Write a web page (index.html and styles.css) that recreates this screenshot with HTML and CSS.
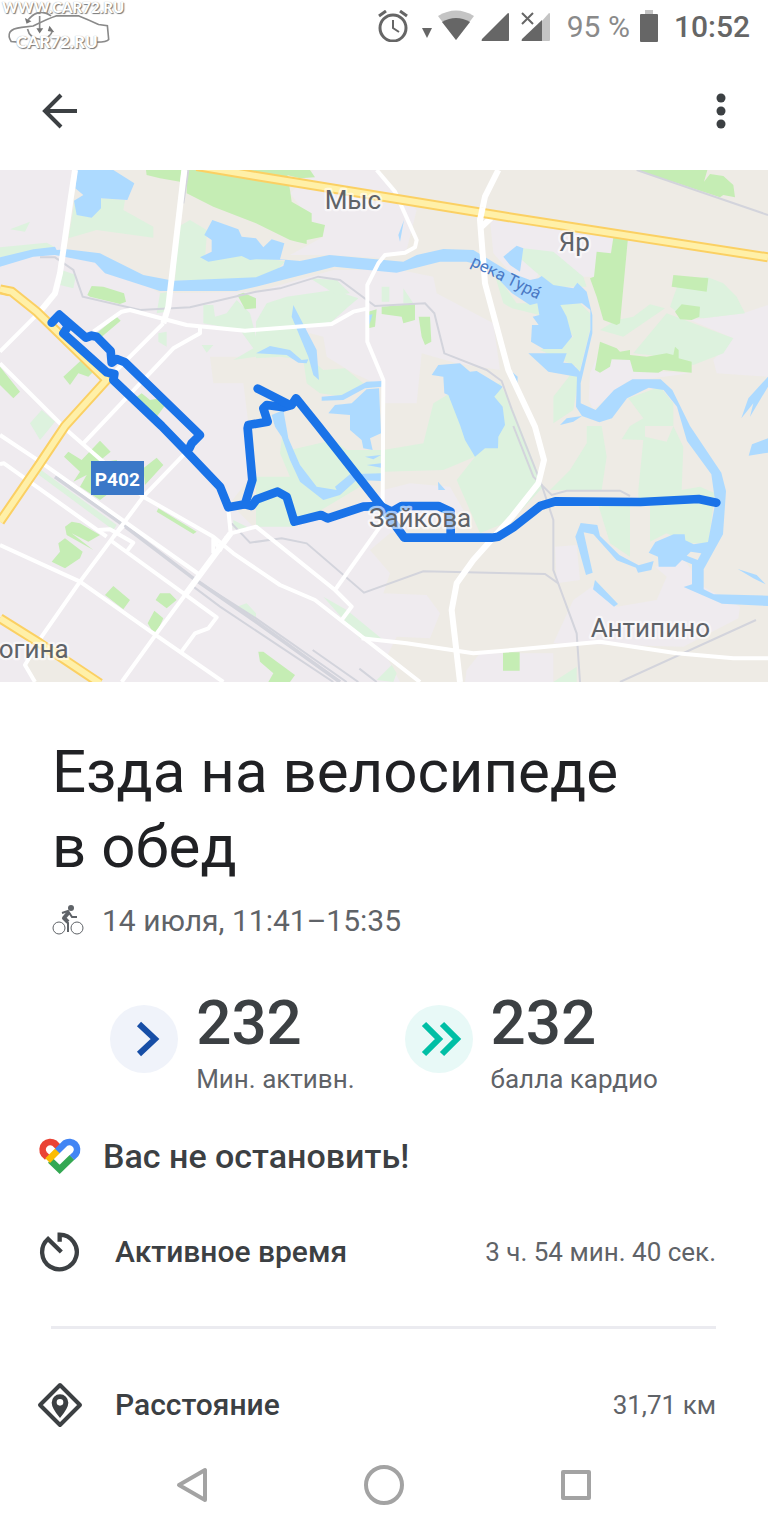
FILE: index.html
```
<!DOCTYPE html>
<html lang="ru">
<head>
    <meta charset="UTF-8">
    <meta name="viewport" content="width=device-width, initial-scale=1.0">
    <title>Езда на велосипеде в обед</title>
    <link rel="stylesheet" href="styles.css">
</head>
<body>
    <div class="watermark">
        <span class="watermark-text">WWW.CAR72.RU</span>
        <svg class="watermark-car" viewBox="0 0 330 110" aria-hidden="true">
            <g fill="none" stroke="#8a8a8a" stroke-width="5">
                <path d="M50 92 L28 90 Q18 74 24 62 Q32 50 60 47 L95 43 Q140 20 165 12 H235 Q265 24 295 38 L322 42 L326 84 Q320 92 290 92"/>
                <path d="M80 24 Q112 -15 150 12 M78 52 Q84 82 120 84 Q148 78 154 58 M115 12 V60"/>
            </g>
            <path fill="#777" d="M70 18 L90 28 75 36Z M160 62 L145 42 140 58Z M105 50 H126 L115 66Z"/>
        </svg>
        <span class="watermark-text watermark-bottom">CAR72.RU</span>
    </div>

    <div class="status-bar">
        <svg class="alarm" width="30" height="32" viewBox="0 0 30 32" aria-label="Будильник">
            <g fill="none" stroke="#666" stroke-width="3">
                <circle cx="15" cy="18" r="13"/>
                <path d="M1 6 L8 1 M29 6 L22 1"/>
                <path d="M15 10 V18 L21 22" stroke-width="2"/>
            </g>
        </svg>
        <svg class="wifi" width="52" height="32" viewBox="0 0 52 32" aria-label="Wi-Fi">
            <path fill="#666" d="M0 18 H10 L5 28Z"/>
            <path fill="#c4c4c4" d="M16 6 Q34 -5 52 6 L34 30Z"/>
            <path fill="#666" d="M20 12 Q34 4 48 12 L34 30Z"/>
        </svg>
        <svg class="signal" width="28" height="32" viewBox="0 0 28 32" aria-label="Сеть">
            <path fill="#666" d="M27 3 Q28 3 28 4 V30 Q28 31 27 31 H1 Q0 31 1 29Z"/>
        </svg>
        <svg class="signal-off" width="30" height="32" viewBox="0 0 30 32" aria-label="Нет сети">
            <path fill="#c4c4c4" d="M28 3 Q29 3 29 4 V30 Q29 31 28 31 H20 V12Z"/>
            <path fill="#666" d="M21 10 V31 H1 Q0 31 1 29Z"/>
            <path fill="none" stroke="#666" stroke-width="2" d="M1 3 L12 14 M12 3 L1 14"/>
        </svg>
        <span class="battery-level">95 %</span>
        <svg class="battery" width="18" height="32" viewBox="0 0 18 32" aria-label="Батарея">
            <path fill="#c4c4c4" d="M5 0 H13 V5 H5Z"/>
            <rect fill="#666" y="4" width="18" height="28" rx="1"/>
        </svg>
        <span class="clock">10:52</span>
    </div>

    <header class="toolbar">
        <button type="button" class="icon-button" aria-label="Назад">
            <svg width="36" height="36" viewBox="0 0 36 36">
                <path fill="none" stroke="#3c4043" stroke-width="4" d="M35 18 H4 M19 2 L3 18 L19 34"/>
            </svg>
        </button>
        <button type="button" class="icon-button" aria-label="Ещё">
            <svg width="10" height="36" viewBox="0 0 20 72">
                <g fill="#3c4043">
                    <circle cx="10" cy="10" r="9"/>
                    <circle cx="10" cy="36" r="9"/>
                    <circle cx="10" cy="62" r="9"/>
                </g>
            </svg>
        </button>
    </header>

    <main>
        <!-- Карта маршрута -->
        <svg class="map" viewBox="0 0 2304 1536" role="img" aria-label="Карта маршрута">
            <rect class="land" width="2304" height="1536"/>
            <g class="urban">
                <path d="M0 0H225L190 235 290 260 480 370 768 365 1000 300 1200 300 1300 320 1310 370 1480 460 1500 600 1370 580 1265 550 1250 700 1150 700V650L1060 610 980 560 970 500 930 490 768 560 630 560 640 640 730 640 745 760V930L690 1000 760 1070 1000 1040 1150 960 1230 940 1350 950 1390 1020 1300 1060 1170 1090 1110 1140 1170 1210 1150 1270 1280 1275 1320 1330 1290 1405 1190 1400 1160 1460 1200 1536H0Z"/>
                <path d="M870 70L940 0H1130L1190 70 1250 120 1220 240 1150 265 990 255 870 255 970 200Z"/>
                <path d="M1470 150L1536 160 1840 205 1815 320 1750 320 1620 300 1600 345 1560 340 1480 250Z"/>
                <path d="M2070 450L2230 430 2304 405V620L2150 610 2140 570 2200 505Z"/>
                <path d="M1800 540L1900 560 1900 600 2070 610 1880 635 1780 720 1766 690 1770 610Z"/>
                <path d="M1665 1130L1730 1125 1740 1230 1670 1240Z"/>
                <path d="M1720 1290L1790 1240 1850 1310 1970 1290 2000 1220 1965 1190 2050 1165 2110 1250 2220 1310 2215 1345 2050 1430 1850 1425 1660 1420Z"/>
                <path d="M1400 1500L1440 1450 1660 1450V1536H1395Z"/>
            </g>
            <path class="land" d="M75 1490L130 1415 300 1536H105Z"/>

            <g class="meadow">
                <path d="M225 90L300 85 375 90 370 120 460 170V203L290 180 205 205Z"/>
                <path d="M30 178L90 155 75 185Z"/>
                <path d="M0 232L140 218 165 232 0 262Z"/>
                <path d="M185 300L228 315 220 355 180 345Z"/>
                <path d="M535 170L570 150 620 180 640 260 768 255 855 275 820 310 768 325 525 332Z"/>
                <path d="M480 370L510 365 500 425 470 430Z"/>
                <path d="M610 405L640 405 645 440 680 430 710 390 750 430 768 500V560L700 570 760 535 720 480 610 460Z"/>
                <path d="M768 455L800 400 860 380 1000 360 1075 385 1045 410 995 455 910 470 935 570 970 600 1035 595 1090 640 1030 680 960 670 920 640 910 570 840 560 768 565Z"/>
                <path d="M475 490L500 485 500 530 475 515Z M605 525H640L620 548Z M90 760L125 720 165 755 120 810Z"/>
                <path d="M930 325L1010 330 1050 370 1010 375Z M1145 350H1168V395H1145Z M1210 355L1240 400H1210Z"/>
                <path d="M850 768L870 840 1000 810 1040 840 1150 840 1270 820 1300 700 1350 670 1500 640 1540 720 1630 950 1536 1050 1440 1090 1370 930 1425 860 1330 900 1150 905 1130 920 980 1010 880 1070H768V920H870L840 850Z"/>
                <path d="M1570 235L1660 245 1750 320 1760 350 1660 350 1600 300 1560 265Z"/>
                <path d="M1480 300L1550 400 1618 400 1618 435 1536 415 1510 400Z"/>
                <path d="M1650 400H1740L1770 430V480L1740 600 1720 720 1660 760V680L1730 590 1620 540 1690 520 1720 500Z"/>
                <path d="M1800 480L1850 450 1900 440 1950 403 1995 415 1870 500Z"/>
                <path d="M1900 550L2000 430 2200 505 2170 550 2080 585 1990 560Z"/>
                <path d="M2035 340L2120 320 2170 340 2210 380 2235 430 2110 445 2050 440 2010 410Z"/>
                <path d="M1885 685L1980 650 2020 700 2020 768H1890L1930 745Z"/>
                <path d="M1650 960L1710 900 1760 820V768H1805L1820 860 1805 960Z"/>
                <path d="M1890 768H1935V800L2000 815 2020 768 2050 830 2045 960 2100 950 2145 970 2125 1120 2060 1120 2000 1090 1950 1115V1000H1915V960L1930 810 1865 808Z"/>
                <path d="M1795 1005H1890V1160L1830 1120Z"/>
                <path d="M110 890L350 1065 340 1080 110 910Z M700 1050L760 1080 700 1075Z"/>
                <path d="M970 1280L1040 1320 1150 1410 1080 1405Z M1130 1530L1175 1485 1190 1510 1180 1536Z M1660 1536L1730 1490V1536Z M710 1310L740 1300 768 1330V1350Z"/>
            </g>

            <g class="forest">
                <path d="M438 0H545L540 35 480 25 440 15Z"/>
                <path d="M562 0H860L870 60 875 95 935 130 935 155 975 165 968 200 920 210V222L890 215 870 210 768 160 640 110 560 70Z"/>
                <path d="M800 0H930L945 22 900 25Z"/>
                <path d="M262 375L275 348 310 350 372 370 378 395 360 402 270 380Z"/>
                <path d="M712 375L730 368 768 385V415L735 418Z"/>
                <path d="M290 490L350 440 362 452 300 505Z M190 620L250 565 285 600 265 620 235 610 210 645Z"/>
                <path d="M405 685L425 670 450 690 480 685 500 700 470 740Z M0 590L60 665 40 685 0 645Z"/>
                <path d="M1105 425L1130 418 1125 470 1105 475Z M1145 410L1245 402 1245 450 1210 460 1205 440 1145 432Z M1256 440H1290L1294 515 1275 525 1265 500Z"/>
                <path d="M1840 203H1884L1860 460 1850 465 1810 450 1790 380 1770 325 1782 320 1790 245 1833 250Z"/>
                <path d="M1910 0H2122L2112 35 2130 12 2170 18 2200 45 2205 82 2170 75 2160 82Z"/>
                <path d="M1800 515L1850 535 1860 545 1890 540V555L1940 560 2000 550 2020 555 2025 530 2036 540V565L2075 575V608L1990 600 1975 608 1900 605 1890 570 1835 568 1830 590 1800 608 1785 600Z"/>
                <path d="M2020 315L2125 325 2120 365 2015 350Z M2025 425L2045 403 2100 410 2098 440 2075 450 2040 448Z"/>
                <path d="M192 860L205 845 245 870 300 812 332 845 290 880 350 870 380 930 300 990 240 950 260 915 220 935 240 905Z"/>
                <path d="M430 895L470 863 490 885 435 945Z M475 1015L590 1085 580 1092 470 1025Z"/>
                <path d="M195 1070L215 1055 240 1060 300 1095 265 1115 215 1090 280 1140 200 1095Z M155 1175L180 1145 175 1120 195 1105 248 1145 240 1165 195 1195Z"/>
                <path d="M315 1275L340 1248 390 1290 370 1318Z M467 1290L480 1270 510 1270 530 1290 500 1315Z M443 1360L463 1322 490 1345 470 1388 455 1380Z"/>
                <path d="M775 1445L790 1445 885 1515 870 1536H805L820 1510 780 1475Z M1509 1447H1559V1502H1509Z"/>
            </g>

            <path class="land" d="M622 175L645 215 640 250 615 265Z"/>

            <g class="water">
                <path d="M232 0H340L403 40 382 90 303 85 303 115 275 143 230 135 222 92 250 75 226 55Z"/>
                <path d="M637 150L715 178 725 200 768 205 790 232 815 208 853 220 840 268 900 273 988 255 1210 275 1250 255 1330 237 1420 240 1536 310 1590 330 1615 325 1625 318 1660 345 1720 355 1732 338 1760 365 1777 435V490L1742 640V700L1787 720 1842 660 1897 628H1982L2017 660 2070 768 2164 908 2178 963 2169 1093 2111 1198V1258L2141 1273 2304 1277V1308L2166 1301 2051 1251 2076 1243V1183L2046 1170 2026 1190H1976L1974 1160 1946 1148 1966 1116 2021 1093H2054L2056 1111 2081 1123 2124 1116 2146 998 2134 913 2061 813 2044 755 2031 710 1991 660 1946 653 1881 685 1836 745 1798 757 1746 738 1728 710 1731 620 1700 615 1645 605 1585 550H1700L1690 578 1715 580 1740 605 1771 480V420L1746 400 1681 405 1700 440 1716 500 1686 537H1631L1593 515 1596 465H1616L1598 440 1618 435 1612 400 1590 405 1536 370 1460 290 1400 275 1320 275 1190 308 1003 290 768 350 710 363H480L315 310 285 278 165 255 100 260 0 290V262L100 238 165 230 170 240 200 238 300 250 430 315 520 332 768 322 850 288 855 270 768 268 750 270 725 258 625 275 600 262 635 245V210L613 195Z"/>
                <path d="M1212 150L1200 215 1195 195Z M1510 260L1550 227 1570 235 1560 305 1530 285Z"/>
                <path d="M880 405L950 540 957 630 940 615 925 560 875 440Z M768 550L810 528 870 540 905 570 925 568 920 580 895 578 860 555Z"/>
                <path d="M965 680L1025 675 1100 635 1148 633 1145 650 1095 655 1030 690 965 692Z"/>
                <path d="M985 730L1005 705 1055 700 1100 658 1137 655 1143 790 1110 805 1118 840 1090 835 1085 810 1050 780 1050 735Z"/>
                <path d="M815 735L850 720 865 805 900 885 950 950 1010 960 1005 950 1050 913 1143 910V933L1070 930 1020 975 970 990 900 935 870 870 845 800 825 770Z"/>
                <path d="M1295 615L1315 585 1380 580 1410 605 1430 603 1508 650 1483 680 1508 710 1515 765 1495 800 1494 835 1455 835 1425 860 1395 810 1380 765 1345 675 1333 670 1330 620Z"/>
                <path d="M1095 860L1143 855 1120 868Z M1100 885L1143 880V893Z M1314 935L1336 960H1315Z M1105 435L1118 433 1108 465Z"/>
                <path d="M2304 620L2245 685 2224 745 2260 700 2250 740 2304 650Z M2304 805L2256 823 2246 857 2304 848Z"/>
                <path d="M1742 1059L1792 1065 1800 1098 1858 1155 1916 1186 1961 1173 1954 1200 1914 1208 1908 1193 1850 1171 1780 1093 1751 1087 1778 1208 1758 1215 1726 1100Z"/>
                <path d="M1785 1230L1854 1302 1842 1310 1779 1258Z M2213 1197L2270 1215 2297 1243 2260 1225Z M1536 605L1553 620 1552 640Z M1680 765L1700 745 1746 738 1720 755Z"/>
            </g>
            <path class="land" d="M2060 1157L2072 1145 2104 1150 2093 1170Z"/>

            <g class="rail">
                <path d="M120 262H165L220 300 248 380 420 420 570 412 768 365 840 355 955 320 1020 330 1125 408 1275 400 1303 430 1333 550 1460 600 1505 633 1536 720 1625 945 1660 1050V1200L1730 1390 1740 1536"/>
                <path d="M1540 768L1600 920 1655 975 1700 962H1860L1890 978"/>
                <path d="M695 1060L750 1118 845 1105 920 1120 1092 1268 1270 1204 1536 1210 1635 1212 1675 1240"/>
                <path d="M565 0L550 100M1910 0L2304 135M1860 1536L2268 1350M938 1440L1075 1536M1078 1496L1130 1536"/>
                <path d="M400 1085L580 1225 768 1345 1040 1536M580 1250L660 1310 1000 1536"/>
            </g>
            <path class="rail rail-wide" d="M165 920L370 1065 580 1225 768 1355 1020 1536"/>

            <g class="road">
                <path d="M490 460L350 600 240 720M600 465V490L520 535 250 820M0 545L120 425M0 580L200 780 430 980 640 1100 700 1150 840 1245 945 1290 1260 1536"/>
                <path d="M280 485L365 425 390 420 560 465 735 482 995 462 1060 425 1105 415"/>
                <path d="M1130 0L1185 65 1250 210 1245 232 1215 248 1155 255 1135 280 1102 345V515L1150 630 1148 1000 1140 1070 1005 1260"/>
                <path d="M1085 1405L1220 1420 1420 1450 1536 1440 1800 1415 2030 1450 2200 1465H2304"/>
                <path d="M0 795L120 875 600 1215M0 882L12 880 320 1100M330 1110L650 1342 625 1375 585 1390 543 1447M555 850L430 980 240 1235 125 1400 75 1485 105 1536"/>
                <path d="M0 1125L240 1235 460 1390 670 1536M685 1020L692 1090 555 1275 470 1390 365 1536M692 1090L768 1070 1005 1260 1055 1310 1025 1350M640 1150V1105L660 1140 680 1100"/>
                <path d="M295 1080L330 1078 400 1118 380 1145M340 1100L370 1068"/>
            </g>
            <g class="road road-wide">
                <path d="M225 0L213 80 180 310 165 370 120 425M553 0L505 410 490 460"/>
                <path d="M1495 0L1455 80 1440 150 1455 340 1525 600 1605 770 1632 870 1615 940 1536 1040 1420 1170 1370 1240 1355 1320 1380 1536M1440 175L1475 142M692 1090L555 1275"/>
            </g>

            <g class="highway-edge">
                <path d="M590 -12L768 18 1536 143 2304 262M0 358L35 365 110 425 320 630 195 768 160 820 120 880 0 1055M0 1345L120 1420 300 1540"/>
            </g>
            <g class="highway">
                <path d="M590 -12L768 18 1536 143 2304 262M0 358L35 365 110 425 320 630 195 768 160 820 120 880 0 1055M0 1345L120 1420 300 1540"/>
            </g>
            <path class="highway-line" d="M0 368L25 376"/>
            <path class="road road-wide" d="M1448 112L1440 150"/>

            <g class="route">
                <path d="M155 458L178 434 258 503 275 497 290 500 332 543 335 578 350 567 375 577 600 795 575 820 568 835"/>
                <path d="M180 440L205 468 190 490 320 607 343 612 340 630 485 768 560 845 660 950 685 1012 735 1003 757 930 743 775 745 765 803 755 790 715 800 705 850 712 875 705 888 685 955 768 1145 1010 1213 1103H1475L1495 1100 1540 1072 1621 1008 1666 994 1921 996 2096 987 2149 998"/>
                <path d="M773 656L870 705M735 1003L755 1008 770 988 833 965 860 980 883 1055 963 1035 983 1045 1090 1010 1140 1008 1175 1025 1205 1008 1315 1008 1352 1025V1100"/>
            </g>

            <g class="place">
                <text x="974" y="118">Мыс</text>
                <text x="1676" y="242">Яр</text>
                <text x="1107" y="1070">Зайкова</text>
                <text x="1772" y="1402">Антипино</text>
                <text x="-4" y="1463">огина</text>
            </g>
            <path id="river-line" fill="none" d="M1410 286Q1510 335 1660 412"/>
            <text class="river-name"><textPath href="#river-line">река Тура́</textPath></text>
            <rect class="shield" x="273" y="873" width="159" height="102"/>
            <text class="shield-text" x="352" y="947">Р402</text>
        </svg>

        <section class="summary">
            <h1>Езда на велосипеде в&nbsp;обед</h1>
            <p class="date">
                <svg width="34" height="32" viewBox="0 0 34 32" aria-hidden="true">
                    <g fill="none" stroke="#5f6368">
                        <circle cx="7" cy="23" r="6"/>
                        <circle cx="25" cy="23" r="6"/>
                        <path stroke-width="4" stroke-linejoin="round" d="M17 7 L12 13 L16 17"/>
                        <path stroke-width="2" d="M11 13 L16 18 V27"/>
                        <path stroke-width="2" d="M10 8 L16 6 L20 12 H25"/>
                    </g>
                    <circle cx="19" cy="3" r="3" fill="#5f6368"/>
                </svg>
                <span>14 июля, 11:41–15:35</span>
            </p>
        </section>

        <section class="stats">
            <div class="stat">
                <span class="stat-icon minutes">
                    <svg width="68" height="68" viewBox="0 0 68 68" aria-hidden="true">
                        <path fill="none" stroke="#174ea6" stroke-width="6" d="M29 19 L45 34 L29 49"/>
                    </svg>
                </span>
                <div>
                    <div class="stat-value">232</div>
                    <div class="stat-label">Мин. активн.</div>
                </div>
            </div>
            <div class="stat">
                <span class="stat-icon cardio">
                    <svg width="68" height="68" viewBox="0 0 68 68" aria-hidden="true">
                        <path fill="none" stroke="#00bfa5" stroke-width="6" d="M19 19 L34 34 L19 49 M37 19 L52 34 L37 49"/>
                    </svg>
                </span>
                <div>
                    <div class="stat-value">232</div>
                    <div class="stat-label">балла кардио</div>
                </div>
            </div>
        </section>

        <div class="praise">
            <svg width="46" height="38" viewBox="50 50 138 114" aria-hidden="true">
                <g fill="none" stroke-width="20">
                    <path stroke="#34a853" d="M90 120 L118 147 L155 111"/>
                    <path stroke="#ea4335" d="M81 111 L71 101 A23 23 0 0 1 103 69 L114 80"/>
                    <path stroke="#fbbc04" d="M82 121 L112 91"/>
                    <path stroke="#4285f4" d="M111 92 L134 69 A23 23 0 0 1 166 101 L155 112"/>
                </g>
            </svg>
            <h2>Вас не остановить!</h2>
        </div>

        <dl class="details">
            <div class="detail">
                <svg width="46" height="46" viewBox="50 317 138 138" aria-hidden="true">
                    <path fill="none" stroke="#3c4043" stroke-width="13" d="M118 355 V334 A52 52 0 1 1 83 347 L123 386"/>
                </svg>
                <dt>Активное время</dt>
                <dd>3 ч. 54 мин. 40 сек.</dd>
            </div>
            <div class="detail">
                <svg width="46" height="46" viewBox="50 784 138 138" aria-hidden="true">
                    <path fill="none" stroke="#3c4043" stroke-width="12" stroke-linejoin="round" d="M119 793 L179 853 L119 913 L59 853Z"/>
                    <path fill="#3c4043" fill-rule="evenodd" d="M119 892 Q94 862 94 846 A25 25 0 0 1 144 846 Q144 862 119 892Z M119 835 A10 10 0 1 0 119 855 A10 10 0 1 0 119 835Z"/>
                </svg>
                <dt>Расстояние</dt>
                <dd>31,71 км</dd>
            </div>
        </dl>
    </main>

    <nav class="nav-bar">
        <button type="button" aria-label="Назад">
            <svg width="40" height="40" viewBox="0 0 40 40"><path d="M33 5 V35 L7 20Z"/></svg>
        </button>
        <button type="button" aria-label="Домой">
            <svg width="40" height="40" viewBox="0 0 40 40"><circle cx="20" cy="20" r="18"/></svg>
        </button>
        <button type="button" aria-label="Недавние">
            <svg width="40" height="40" viewBox="0 0 40 40"><rect x="7" y="7" width="26" height="26"/></svg>
        </button>
    </nav>
</body>
</html>
```
FILE: styles.css
```
* {
    box-sizing: border-box;
}
body {
    margin: 0;
    min-height: 100vh;
    display: flex;
    flex-direction: column;
    position: relative;
    background-color: #fff;
    color: #3c4043;
    font-family: Roboto, "Noto Sans", sans-serif;
}
h1, h2, p, dl, dt, dd {
    margin: 0;
}
svg {
    display: block;
    flex-shrink: 0;
}
button {
    display: flex;
    justify-content: center;
    align-items: center;
    padding: 0;
    border: 0;
    background: none;
    cursor: pointer;
}

/* Водяной знак */
.watermark {
    position: absolute;
    top: 0;
    left: 2px;
    width: 124px;
}
.watermark-text {
    display: block;
    font-family: Lato, sans-serif;
    font-size: 15px;
    font-weight: 900;
    line-height: 14px;
    color: #fff;
    text-shadow: 1px 1px 1px #777, 0 0 1px #999;
}
.watermark-car {
    position: absolute;
    top: 12px;
    left: 0;
    width: 108px;
}
.watermark-bottom {
    position: relative;
    margin: 21px 0 0 14px;
    font-size: 17px;
}

/* Строка состояния */
.status-bar {
    display: flex;
    justify-content: flex-end;
    align-items: center;
    height: 52px;
    padding-right: 18px;
    color: #666;
}
.wifi {
    margin-left: 14px;
}
.signal {
    margin-left: 7px;
}
.signal-off {
    margin-left: 12px;
}
.battery-level {
    margin: 0 10px 0 16px;
    font-size: 30px;
    color: #8a8a8a;
}
.clock {
    margin-left: 16px;
    font-size: 30px;
    font-weight: 500;
}

.toolbar {
    display: flex;
    justify-content: space-between;
    align-items: center;
    height: 118px;
    padding: 0 12px;
}
.icon-button {
    width: 96px;
    height: 96px;
}
.icon-button:last-child {
    width: 70px;
}

/* Карта */
.map {
    width: 100%;
    height: auto;
}
.land {
    fill: #eeebe5;
}
.urban {
    fill: #efebef;
}
.meadow {
    fill: #ddf2de;
}
.forest {
    fill: #c5edb4;
}
.water {
    fill: #addaff;
}
.rail {
    fill: none;
    stroke: #d3d4dc;
    stroke-width: 6;
}
.rail-wide {
    stroke-width: 11;
}
.road {
    fill: none;
    stroke: #fff;
    stroke-width: 12;
    stroke-linejoin: round;
}
.road-wide {
    stroke-width: 18;
}
.highway-edge {
    fill: none;
    stroke: #fbd063;
    stroke-width: 30;
    stroke-linejoin: round;
}
.highway {
    fill: none;
    stroke: #fff0a8;
    stroke-width: 18;
    stroke-linejoin: round;
}
.highway-line {
    stroke: #fbd063;
    stroke-width: 5;
}
.route {
    fill: none;
    stroke: #1a73e8;
    stroke-width: 26;
    stroke-linecap: round;
    stroke-linejoin: round;
}
.place {
    font-size: 78px;
    fill: #5f6368;
    stroke: rgba(255, 255, 255, 0.6);
    stroke-width: 14;
    stroke-linejoin: round;
    paint-order: stroke;
}
.river-name {
    font-size: 50px;
    fill: #4a79c4;
}
.shield {
    fill: #3b78c8;
}
.shield-text {
    font-size: 57px;
    font-weight: 700;
    fill: #fff;
    text-anchor: middle;
}

/* Заголовок тренировки */
.summary {
    padding: 52px 52px 0;
}
h1 {
    max-width: 600px;
    font-size: 60px;
    font-weight: 400;
    line-height: 75px;
    color: #202124;
}
.date {
    display: flex;
    align-items: center;
    gap: 16px;
    margin-top: 17px;
    font-size: 30px;
    line-height: 40px;
    color: #5f6368;
}

.stats {
    display: flex;
    justify-content: center;
    gap: 50px;
    margin-top: 48px;
}
.stat {
    display: flex;
    align-items: flex-start;
    gap: 18px;
}
.stat-icon {
    margin-top: 16px;
    border-radius: 50%;
}
.minutes {
    background-color: #f0f3fa;
}
.cardio {
    background-color: #e8f9f7;
}
.stat-value {
    font-size: 62px;
    font-weight: 500;
    line-height: 68px;
}
.stat-label {
    margin-top: 6px;
    font-size: 26px;
    line-height: 32px;
    color: #5f6368;
}

.praise {
    display: flex;
    align-items: center;
    gap: 20px;
    margin-top: 42px;
    padding: 0 37px;
}
h2 {
    font-size: 34px;
    font-weight: 500;
    line-height: 36px;
}

.details {
    padding: 0 52px 0 37px;
}
.detail {
    display: flex;
    align-items: center;
    position: relative;
    height: 153px;
}
/* Разделитель начинается правее иконок */
.detail + .detail::before {
    content: "";
    position: absolute;
    top: -2px;
    left: 14px;
    right: 0;
    height: 3px;
    background-color: #ebebf0;
}
dt {
    margin-left: 32px;
    font-size: 30px;
    font-weight: 500;
}
dd {
    margin-left: auto;
    font-size: 26px;
    color: #5f6368;
}

/* Кнопки навигации */
.nav-bar {
    display: grid;
    grid-template-columns: repeat(3, 1fr);
    position: absolute;
    left: 0;
    right: 0;
    bottom: 0;
    height: 102px;
    padding: 0 calc(100% / 8);
}
.nav-bar svg {
    fill: none;
    stroke: #a3a3a3;
    stroke-width: 4;
    stroke-linejoin: round;
}
```
